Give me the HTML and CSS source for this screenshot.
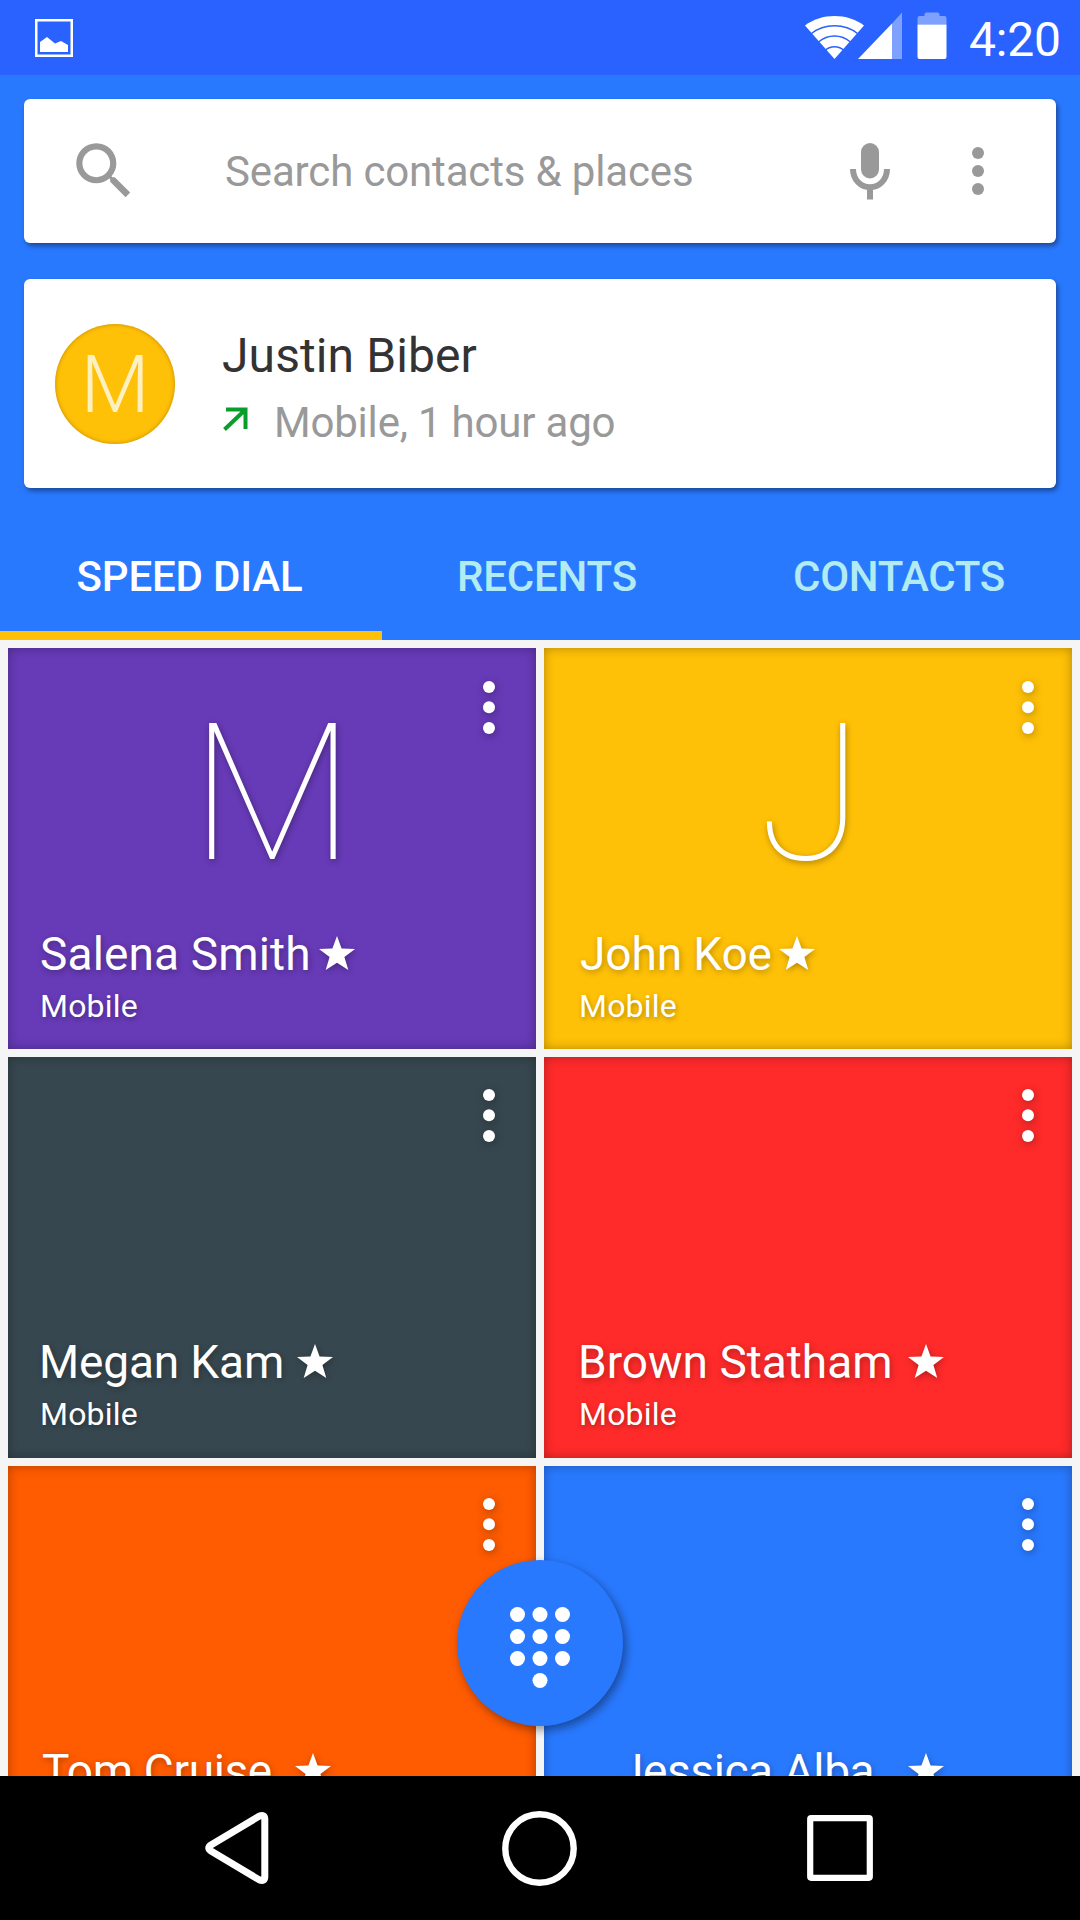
FILE: index.html
```html
<!DOCTYPE html>
<html lang="en">
<head>
<meta charset="utf-8">
<title>Phone</title>
<link rel="stylesheet" href="styles.css">
</head>
<body>
<svg width="0" height="0" class="defs" aria-hidden="true">
  <symbol id="dots" viewBox="0 0 12 53"><circle cx="6" cy="6" r="6"/><circle cx="6" cy="26.2" r="6"/><circle cx="6" cy="47" r="6"/></symbol>
  <symbol id="star" viewBox="0 0 36 34"><path d="M18 0l4.600 12.500L36 13l-10.600 8.100L29.300 34 18 26.700 6.700 34l3.900-12.900L0 13l13.400-.5z"/></symbol>
</svg>
<div class="phone">
  <div class="status">
    <svg class="status-picture" width="38" height="38" viewBox="0 0 38 38"><rect x="1.250" y="1.250" width="35.500" height="35.500" fill="none" stroke="#fff" stroke-width="2.500"/><path fill="#fff" d="M5 23l7-5 8 6.500 6-2.500 7 4v7H5z"/></svg>
    <svg class="status-icons" width="144" height="48" viewBox="0 0 144 48" fill="#fff">
      <path d="M29.500 47L0 13.500C16 .7 43 .7 59 13.500z"/>
      <g fill="none" stroke="#2962ff" stroke-width="1.500"><path d="M6.500 21.500C19 11 40 11 52.500 21.500"/><path d="M13.500 30C23 22 36 22 45.500 30"/><path d="M20 38.500C25 33.500 34 33.500 39 38.500"/></g>
      <path opacity=".4" d="M87 11.500L97 .5V47H87z"/><path d="M53 47L87 11.500V47z"/>
      <path opacity=".4" d="M112.500 12.500V6q0-2 2-2h5V2.500q0-2 2-2h11q2 0 2 2V4h5q2 0 2 2v6.500z"/><path d="M112.500 12.500h29V45q0 2-2 2h-25q-2 0-2-2z"/>
    </svg>
    <span class="clock">4:20</span>
  </div>

  <header class="header">
    <div class="card search">
      <svg class="search-icon" width="74" height="74" viewBox="0 0 24 24" fill="#999"><path d="M15.500 14h-.79l-.28-.27A6.470 6.470 0 0 0 16 9.500 6.500 6.500 0 1 0 9.500 16c1.610 0 3.090-.59 4.230-1.570l.27.28v.79l5 4.990L20.490 19l-4.990-5zm-6 0C7.010 14 5 11.990 5 9.500S7.010 5 9.500 5 14 7.010 14 9.500 11.990 14 9.500 14z"/></svg>
      <span class="placeholder">Search contacts &amp; places</span>
      <svg class="mic" width="40" height="57" viewBox="0 0 40 57"><rect x="11" y="0" width="18" height="35.500" rx="9" fill="#999"/><path d="M3 26c0 11 8 18.300 17 18.300S37 37 37 26M20 44v12.500" fill="none" stroke="#999" stroke-width="6"/></svg>
      <svg class="more" width="12" height="48" viewBox="0 0 12 48" fill="#999"><circle cx="6" cy="6" r="6"/><circle cx="6" cy="24" r="6"/><circle cx="6" cy="42" r="6"/></svg>
    </div>
    <div class="card recent">
      <div class="avatar">M</div>
      <div class="recent-text">
        <div class="recent-name">Justin Biber</div>
        <div class="recent-detail">
          <svg class="call-arrow" width="25" height="24" viewBox="0 0 25 24" fill="none" stroke="#0a9d2c" stroke-width="4"><path d="M3 2.500h19.500V22M22 3L1.500 22.500"/></svg>
          <span>Mobile, 1 hour ago</span>
        </div>
      </div>
    </div>
    <nav class="tabs">
      <div class="tab active">SPEED DIAL</div>
      <div class="tab">RECENTS</div>
      <div class="tab last">CONTACTS</div>
    </nav>
  </header>

  <main class="tiles">
    <section class="tile purple">
      <div class="letter">M</div>
      <svg class="menu" width="12" height="53"><use href="#dots"/></svg>
      <div class="name salena"><span>Salena Smith</span><svg class="star" width="36" height="34"><use href="#star"/></svg></div>
      <div class="kind">Mobile</div>
    </section>
    <section class="tile amber right">
      <div class="letter">J</div>
      <svg class="menu" width="12" height="53"><use href="#dots"/></svg>
      <div class="name john"><span>John Koe</span><svg class="star" width="36" height="34"><use href="#star"/></svg></div>
      <div class="kind">Mobile</div>
    </section>
    <section class="tile slate lower">
      <div class="letter"></div>
      <svg class="menu" width="12" height="53"><use href="#dots"/></svg>
      <div class="name megan"><span>Megan Kam</span><svg class="star" width="36" height="34"><use href="#star"/></svg></div>
      <div class="kind">Mobile</div>
    </section>
    <section class="tile red right lower">
      <div class="letter"></div>
      <svg class="menu" width="12" height="53"><use href="#dots"/></svg>
      <div class="name brown"><span>Brown Statham</span><svg class="star" width="36" height="34"><use href="#star"/></svg></div>
      <div class="kind">Mobile</div>
    </section>
    <section class="tile orange lower">
      <div class="letter"></div>
      <svg class="menu" width="12" height="53"><use href="#dots"/></svg>
      <div class="name tom"><span>Tom Cruise</span><svg class="star" width="36" height="34"><use href="#star"/></svg></div>
    </section>
    <section class="tile blue right lower">
      <div class="letter"></div>
      <svg class="menu" width="12" height="53"><use href="#dots"/></svg>
      <div class="name jessica"><span>Jessica Alba</span><svg class="star" width="36" height="34"><use href="#star"/></svg></div>
    </section>
    <div class="fab">
      <svg width="60" height="81" viewBox="0 0 60 81" fill="#fff"><circle cx="7.500" cy="7.500" r="7.500"/><circle cx="30" cy="7.500" r="7.500"/><circle cx="52.500" cy="7.500" r="7.500"/><circle cx="7.500" cy="29.500" r="7.500"/><circle cx="30" cy="29.500" r="7.500"/><circle cx="52.500" cy="29.500" r="7.500"/><circle cx="7.500" cy="51.500" r="7.500"/><circle cx="30" cy="51.500" r="7.500"/><circle cx="52.500" cy="51.500" r="7.500"/><circle cx="30" cy="73.500" r="7.500"/></svg>
    </div>
  </main>

  <footer class="navbar">
    <svg width="64" height="72" viewBox="0 0 64 72" fill="none" stroke="#fff" stroke-width="7"><path d="M54 4.300L6 33q-4.500 3 0 6l48 28.700q5.800 2.500 5.800-3V7.300q0-5.500-5.800-3z"/></svg>
    <svg class="home" width="75" height="75" viewBox="0 0 75 75" fill="none" stroke="#fff" stroke-width="6.400"><circle cx="37.500" cy="37.500" r="34.200"/></svg>
    <svg class="overview" width="66" height="66" viewBox="0 0 66 66" fill="none" stroke="#fff" stroke-width="6.200"><rect x="3.200" y="3.200" width="59.600" height="59.600" rx="1"/></svg>
  </footer>
</div>
</body>
</html>
```
FILE: styles.css
```css
* { box-sizing: border-box; }
body { margin: 0; font-family: Roboto, "Noto Sans", sans-serif; color: #fff; }
svg { display: block; flex: none; }
.defs { position: absolute; }
.phone { width: 1080px; height: 1920px; display: flex; flex-direction: column; overflow: hidden; background: #f5f5f5; }

.status { height: 75px; flex: none; display: flex; align-items: flex-start; background: #2962ff; padding: 0 19px 0 35px; }
.status-picture { margin-top: 19px; }
.status-icons { margin: 12px 0 0 auto; }
.clock { width: 92px; margin-left: 20px; padding-top: 4px; font-size: 48px; letter-spacing: -.2px; line-height: 72px; white-space: nowrap; }

.header { height: 565px; flex: none; background: #2979ff; padding-top: 24px; display: flex; flex-direction: column; }
.card { margin: 0 24px; background: #fff; border-radius: 6px; box-shadow: 2px 3px 5px rgba(0, 0, 0, .4); display: flex; flex: none; }
.search { height: 144px; align-items: flex-start; padding: 0 72px 0 43px; }
.search-icon { margin-top: 35px; }
.placeholder { margin: 43px auto 0 84px; font-size: 42px; letter-spacing: -.15px; line-height: 60px; color: #999; white-space: nowrap; }
.mic { margin-top: 44px; }
.more { margin: 48px 0 0 82px; }

.recent { height: 209px; margin-top: 36px; padding: 45px 31px; }
.avatar { width: 120px; height: 120px; border-radius: 50%; background: #ffc107; box-shadow: inset 0 0 4px rgba(150, 100, 0, .6); color: rgba(255, 255, 255, .75); font-size: 80px; font-weight: 300; line-height: 122px; text-align: center; }
.recent-text { margin-left: 47px; }
.recent-name { font-size: 48px; line-height: 64px; color: #333; letter-spacing: .1px; }
.recent-detail { display: flex; align-items: flex-start; font-size: 42px; line-height: 60px; letter-spacing: -.2px; color: #999; margin-top: 5px; }
.call-arrow { margin: 14px 26px 0 1px; }

.tabs { flex: 1; display: grid; grid-template-columns: 382px 332px 366px; }
.tab { padding: 59px 2px 0 0; text-align: center; font-size: 42px; font-weight: 500; letter-spacing: -.2px; line-height: 60px; color: #b2ebf2; white-space: nowrap; }
.active { color: #fff; padding-right: 3px; border-bottom: 9px solid #ffc107; }
.last { padding: 59px 0 0 4px; letter-spacing: -.3px; }

.tiles { position: relative; height: 1136px; flex: none; padding: 8px; display: grid; grid-template-columns: 528px 528px; grid-auto-rows: 401px; gap: 8px; overflow: hidden; }
.tile { padding: 33px 41px 0 32px; display: grid; grid-template-rows: 245px 56px 45px; align-content: start; box-shadow: inset 0 0 11px rgba(0, 0, 0, .3); }
.right { padding: 33px 38px 0 36px; }
.lower { padding-top: 32px; }
.purple { background: #673ab7; }
.amber { background: #ffc107; }
.slate { background: #37474f; }
.red { background: #ff2a2a; }
.orange { background: #ff5b00; }
.blue { background: #2979ff; }
.letter { grid-area: 1 / 1; padding: 13px 0 0 10px; text-align: center; font-size: 191px; font-weight: 100; line-height: 200px; text-shadow: 1px 2px 6px rgba(0, 0, 0, .35); }
.right .letter { padding-left: 8px; }
.menu { grid-area: 1 / 1; justify-self: end; fill: #fff; overflow: visible; filter: drop-shadow(1px 2px 4px rgba(0, 0, 0, .3)); }
.name { display: flex; align-items: flex-start; font-size: 46px; line-height: 56px; white-space: nowrap; text-shadow: 1px 2px 6px rgba(0, 0, 0, .3); }
.star { margin: 10px 0 0 11px; fill: #fff; overflow: visible; filter: drop-shadow(1px 2px 3px rgba(0, 0, 0, .3)); }
.kind { padding-top: 4px; font-size: 32px; letter-spacing: .2px; line-height: 40px; text-shadow: 1px 2px 5px rgba(0, 0, 0, .3); }
.right .kind { margin-left: -1px; }
.salena { letter-spacing: .15px; }
.salena .star { margin-left: 8px; }
.john { letter-spacing: -.1px; }
.john .star { margin-left: 7px; }
.megan { margin-left: -1px; letter-spacing: -.15px; }
.megan .star { margin-left: 13px; }
.brown { margin-left: -2px; }
.brown .star { margin-left: 15px; }
.tom { margin-left: 2px; letter-spacing: -.35px; }
.tom .star { margin-left: 23px; }
.jessica { padding-left: 38px; letter-spacing: -.4px; }
.jessica .star { margin-left: 34px; }

.fab { position: absolute; left: 457px; top: 920px; width: 166px; height: 166px; border-radius: 50%; background: #2979ff; box-shadow: 3px 4px 10px rgba(0, 0, 0, .4); display: flex; justify-content: center; padding-top: 47px; }

.navbar { height: 144px; flex: none; background: #000; display: flex; align-items: center; padding-left: 205px; }
.home { margin-left: 233px; }
.overview { margin-left: 230px; }
```
